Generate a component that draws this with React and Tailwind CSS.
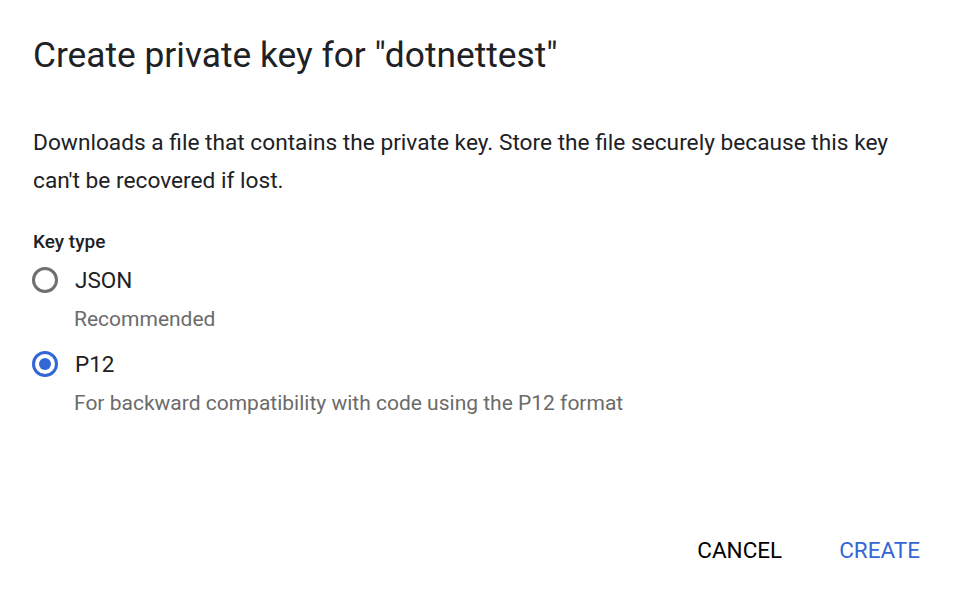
import React from "react";

function Radio({ checked }) {
  return checked ? (
    <span className="flex h-[26px] w-[26px] shrink-0 items-center justify-center rounded-full border-[3px] border-[#3367d6]">
      <span className="block h-[12px] w-[12px] rounded-full bg-[#3367d6]" />
    </span>
  ) : (
    <span className="block h-[26px] w-[26px] shrink-0 rounded-full border-[3px] border-[#6f6f6f]" />
  );
}

export default function App() {
  return (
    <div className="flex h-[598px] w-[956px] flex-col bg-white font-['Roboto',sans-serif] text-[#202124]">
      <div className="px-[33px] pt-[32px]">
        <h1 className="text-[35.3px] leading-[46px]">Create private key for "dotnettest"</h1>
        <p className="mt-[46px] text-[22.7px] leading-[38px]">
          Downloads a file that contains the private key. Store the file securely because this key
          can't be recovered if lost.
        </p>
        <div className="mt-[30px] text-[19px] font-medium leading-[24px]">Key type</div>
        <div className="mt-[10px] flex flex-col">
          <label className="flex items-center gap-[17px] leading-[32px]">
            <span className="ml-[-1px] block"><Radio checked={false} /></span>
            <span className="text-[22.5px]">JSON</span>
          </label>
          <div className="ml-[41px] mt-[11px] text-[21px] leading-[24px] text-[#6b6b6b]">Recommended</div>
          <label className="mt-[17px] flex items-center gap-[17px] leading-[32px]">
            <span className="ml-[-1px] block"><Radio checked={true} /></span>
            <span className="text-[22.5px]">P12</span>
          </label>
          <div className="ml-[41px] mt-[11px] text-[21px] leading-[24px] text-[#6b6b6b]">
            For backward compatibility with code using the P12 format
          </div>
        </div>
      </div>
      <div className="mt-auto flex justify-end gap-[57px] pb-[34px] pr-[36px]">
        <button className="text-[22.5px] uppercase leading-[28px] text-black">Cancel</button>
        <button className="text-[22.5px] uppercase leading-[28px] text-[#3367d6]">Create</button>
      </div>
    </div>
  );
}
